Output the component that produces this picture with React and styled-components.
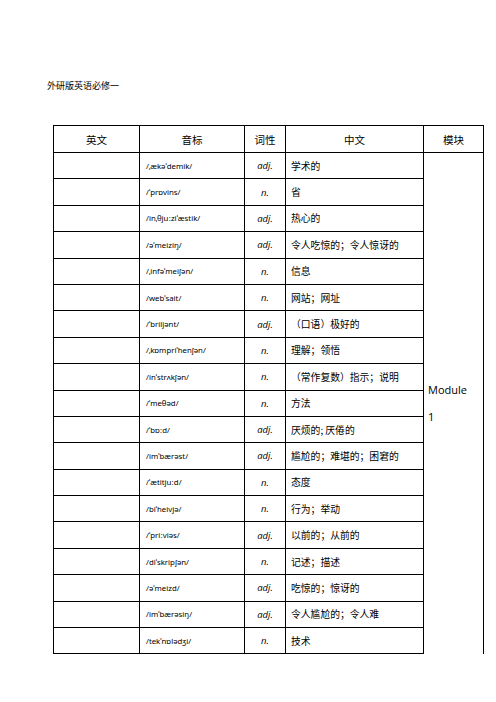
import styled, { createGlobalStyle } from 'styled-components';

const GlobalStyle = createGlobalStyle`
    body {
        margin: 0;
        background: #fff;
        font-family: "Noto Sans CJK SC", "Noto Sans", sans-serif;
        color: #000;
    }
`;

const Page = styled.div`
    width: 496px;
    height: 702px;
    box-sizing: border-box;
    padding: 80px 0 0 47px;
    overflow: hidden;
`;

const Title = styled.div`
    font-size: 9px;
    line-height: 12px;
    height: 12px;
`;

const Table = styled.table`
    margin: 33px 0 0 6px;
    border-collapse: collapse;
    table-layout: fixed;
    width: 430px;
`;

const HeadCell = styled.th`
    border: 1px solid #000;
    height: 26px;
    padding: 0;
    font-weight: normal;
    font-size: 10.5px;
    text-align: center;
`;

const Row = styled.tr`
    height: 26.4px;
`;

const Cell = styled.td`
    border: 1px solid #000;
    padding: 0 0 0 ${(p) => p.$pad || 5}px;
    text-align: ${(p) => (p.$center ? 'center' : 'left')};
    font-size: 9.8px;
    white-space: nowrap;
    overflow: hidden;
`;

const Phonetic = styled(Cell)`
    font-family: "Noto Sans", "Open Sans", sans-serif;
    font-size: 7.8px;
`;

const Pos = styled(Cell)`
    font-family: "Open Sans", "Noto Sans", sans-serif;
    font-style: italic;
    font-size: 9.5px;
    padding: 0;
`;

const ModuleCell = styled.td`
    border: 1px solid #000;
    border-bottom: none;
    padding: 0 0 0 4px;
    vertical-align: middle;
    font-family: "Open Sans", "Noto Sans", sans-serif;
    font-size: 11px;
    line-height: 27px;
`;

const ModuleText = styled.span`
    display: block;
    width: 44px;
`;

const words = [
    ['/ˌækəˈdemik/', 'adj.', '学术的'],
    ['/ˈprɒvins/', 'n.', '省'],
    ['/inˌθjuːziˈæstik/', 'adj.', '热心的'],
    ['/əˈmeiziŋ/', 'adj.', '令人吃惊的；令人惊讶的'],
    ['/ˌinfəˈmeiʃən/', 'n.', '信息'],
    ['/webˈsait/', 'n.', '网站；网址'],
    ['/ˈbriljənt/', 'adj.', '（口语）极好的'],
    ['/ˌkɒmpriˈhenʃən/', 'n.', '理解；领悟'],
    ['/inˈstrʌkʃən/', 'n.', '（常作复数）指示；说明'],
    ['/ˈmeθəd/', 'n.', '方法'],
    ['/ˈbɒːd/', 'adj.', '厌烦的; 厌倦的'],
    ['/imˈbærəst/', 'adj.', '尴尬的；难堪的；困窘的'],
    ['/ˈætitjuːd/', 'n.', '态度'],
    ['/biˈheivjə/', 'n.', '行为；举动'],
    ['/ˈpriːviəs/', 'adj.', '以前的；从前的'],
    ['/diˈskripʃən/', 'n.', '记述；描述'],
    ['/əˈmeizd/', 'adj.', '吃惊的；惊讶的'],
    ['/imˈbærəsiŋ/', 'adj.', '令人尴尬的；令人难'],
    ['/tekˈnɒlədʒi/', 'n.', '技术'],
];

export default function App() {
    return (
        <>
            <GlobalStyle />
            <Page>
                <Title>外研版英语必修一</Title>
                <Table>
                    <colgroup>
                        <col style={{ width: 86 }} />
                        <col style={{ width: 105 }} />
                        <col style={{ width: 41 }} />
                        <col style={{ width: 138 }} />
                        <col style={{ width: 60 }} />
                    </colgroup>
                    <thead>
                        <tr>
                            <HeadCell>英文</HeadCell>
                            <HeadCell>音标</HeadCell>
                            <HeadCell>词性</HeadCell>
                            <HeadCell>中文</HeadCell>
                            <HeadCell>模块</HeadCell>
                        </tr>
                    </thead>
                    <tbody>
                        {words.map(([ph, pos, cn], i) => (
                            <Row key={ph}>
                                <Cell />
                                <Phonetic $pad={6}>{ph}</Phonetic>
                                <Pos $center>{pos}</Pos>
                                <Cell>{cn}</Cell>
                                {i === 0 && (
                                    <ModuleCell rowSpan={words.length}>
                                        <ModuleText>Module 1</ModuleText>
                                    </ModuleCell>
                                )}
                            </Row>
                        ))}
                    </tbody>
                </Table>
            </Page>
        </>
    );
}
